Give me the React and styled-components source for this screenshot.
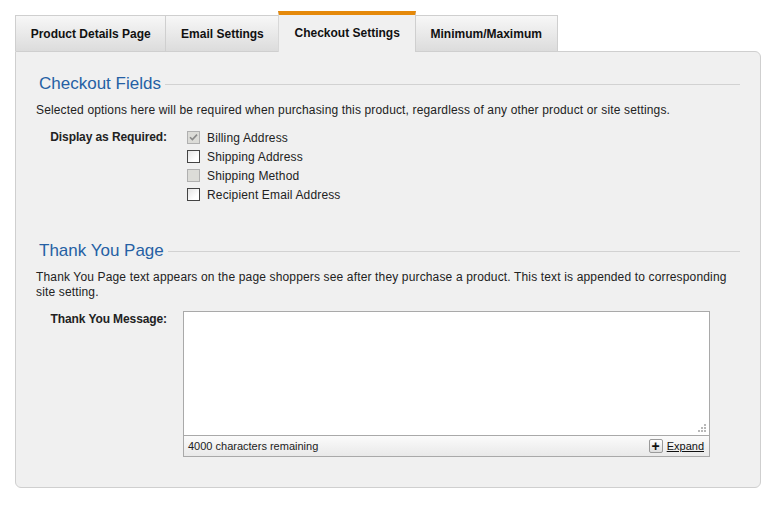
import React, { useState } from "react";
import styled, { createGlobalStyle } from "styled-components";

const GlobalStyle = createGlobalStyle`
  html, body {
    margin: 0;
    padding: 0;
    background: #fff;
  }
  body {
    font-family: "Liberation Sans", Arial, sans-serif;
    font-size: 12px;
    color: #222;
  }
`;

const tabs = [
  "Product Details Page",
  "Email Settings",
  "Checkout Settings",
  "Minimum/Maximum",
];

const fields = [
  { label: "Billing Address", checked: true, disabled: true },
  { label: "Shipping Address", checked: false, disabled: false },
  { label: "Shipping Method", checked: false, disabled: true },
  { label: "Recipient Email Address", checked: false, disabled: false },
];

const MAX_CHARS = 4000;

const Checkbox = ({ checked, disabled, onChange }) => (
  <Box $disabled={disabled} onClick={disabled ? undefined : onChange}>
    {checked && (
      <svg width="9" height="9" viewBox="0 0 9 9">
        <path
          d="M1 4.2 L3.4 6.6 L8 1.6"
          fill="none"
          stroke={disabled ? "#8a8a8a" : "#222"}
          strokeWidth="1.6"
        />
      </svg>
    )}
  </Box>
);

const App = () => {
  const [active, setActive] = useState(2);
  const [checks, setChecks] = useState(fields.map((f) => f.checked));
  const [message, setMessage] = useState("");

  const toggle = (i) => {
    const next = [...checks];
    next[i] = !next[i];
    setChecks(next);
  };

  return (
    <Page>
      <GlobalStyle />
      <Tabs>
        {tabs.map((t, i) => (
          <Tab key={t} $active={i === active} onClick={() => setActive(i)}>
            {t}
          </Tab>
        ))}
      </Tabs>
      <Panel>
        <Heading>Checkout Fields</Heading>
        <Description>
          Selected options here will be required when purchasing this product,
          regardless of any other product or site settings.
        </Description>
        <FormRow>
          <FieldLabel>Display as Required:</FieldLabel>
          <CheckList>
            {fields.map((f, i) => (
              <CheckRow key={f.label}>
                <Checkbox
                  checked={checks[i]}
                  disabled={f.disabled}
                  onChange={() => toggle(i)}
                />
                <span>{f.label}</span>
              </CheckRow>
            ))}
          </CheckList>
        </FormRow>

        <Heading $spaced>Thank You Page</Heading>
        <Description>
          Thank You Page text appears on the page shoppers see after they
          purchase a product. This text is appended to corresponding site
          setting.
        </Description>
        <FormRow>
          <FieldLabel $top>Thank You Message:</FieldLabel>
          <Editor>
            <TextArea
              value={message}
              onChange={(e) => setMessage(e.target.value.slice(0, MAX_CHARS))}
            />
            <Grip>
              <svg width="8" height="8" viewBox="0 0 8 8">
                <g fill="#b8b8b8">
                  <rect x="6" y="0" width="2" height="2" />
                  <rect x="3" y="3" width="2" height="2" />
                  <rect x="6" y="3" width="2" height="2" />
                  <rect x="0" y="6" width="2" height="2" />
                  <rect x="3" y="6" width="2" height="2" />
                  <rect x="6" y="6" width="2" height="2" />
                </g>
              </svg>
            </Grip>
            <EditorFooter>
              <span>{MAX_CHARS - message.length} characters remaining</span>
              <ExpandLink>
                <PlusButton>+</PlusButton>
                <u>Expand</u>
              </ExpandLink>
            </EditorFooter>
          </Editor>
        </FormRow>
      </Panel>
    </Page>
  );
};

export default App;

const Page = styled.div`
  padding: 11px 17px 17px 15px;
`;

const Tabs = styled.div`
  display: flex;
  align-items: flex-end;
`;

const Tab = styled.div`
  height: ${(p) => (p.$active ? "36px" : "35px")};
  display: flex;
  align-items: center;
  padding: 0 ${(p) => (p.$active ? "15px" : "14.7px")};
  font-weight: bold;
  font-size: 12px;
  color: #111;
  cursor: pointer;
  border: 1px solid #cfcfcf;
  border-bottom: none;
  margin-right: -1px;
  background: ${(p) =>
    p.$active ? "#f0f0f0" : "linear-gradient(#f7f7f7, #dcdcdc)"};
  border-top: ${(p) => (p.$active ? "4px solid #e5890a" : "1px solid #cfcfcf")};
  border-left-color: ${(p) => (p.$active ? "#d8d8d8" : "#cfcfcf")};
  position: relative;
  z-index: ${(p) => (p.$active ? 1 : 0)};
  margin-bottom: ${(p) => (p.$active ? "-1px" : "0")};
  padding-bottom: ${(p) => (p.$active ? "1px" : "0")};
`;

const Panel = styled.div`
  background: #f0f0f0;
  border: 1px solid #cfcfcf;
  border-radius: 0 6px 6px 6px;
  padding: 22px 20px 30px 20px;
`;

const Heading = styled.div`
  display: flex;
  align-items: center;
  height: 20px;
  padding-left: 3px;
  margin-top: ${(p) => (p.$spaced ? "37px" : "0")};
  font-size: 17px;
  color: #2560a4;

  &:after {
    content: "";
    flex: 1;
    height: 1px;
    margin-left: 4px;
    background: #d2d2d2;
  }
`;

const Description = styled.p`
  margin: 9px 0 10px;
  line-height: 15px;
  font-size: 12px;
  letter-spacing: 0.15px;
  color: #222;
`;

const FormRow = styled.div`
  display: flex;
  align-items: flex-start;
  gap: 16px;
`;

const FieldLabel = styled.div`
  width: 131px;
  flex-shrink: 0;
  text-align: right;
  font-weight: bold;
  font-size: 12px;
  letter-spacing: -0.1px;
  color: #222;
  line-height: ${(p) => (p.$top ? "18px" : "19px")};
`;

const CheckList = styled.div`
  display: flex;
  flex-direction: column;
`;

const CheckRow = styled.label`
  display: flex;
  align-items: center;
  height: 19px;
  gap: 7px;
  padding-left: 4px;
  font-size: 12px;
  letter-spacing: 0.15px;
  color: #222;
`;

const Box = styled.span`
  box-sizing: border-box;
  width: 13px;
  height: 13px;
  display: flex;
  align-items: center;
  justify-content: center;
  border: 1px solid ${(p) => (p.$disabled ? "#b0b0b0" : "#444")};
  background: ${(p) =>
    p.$disabled ? "#dcdcd8" : "linear-gradient(135deg, #e4e4e4, #ffffff 70%)"};
  cursor: ${(p) => (p.$disabled ? "default" : "pointer")};
`;

const Editor = styled.div`
  position: relative;
  width: 525px;
  margin-top: 1px;
  display: flex;
  flex-direction: column;
  border: 1px solid #a9a9a9;
`;

const TextArea = styled.textarea`
  box-sizing: border-box;
  height: 124px;
  border: none;
  border-bottom: 1px solid #a9a9a9;
  resize: none;
  outline: none;
  padding: 4px;
  background: #fff;
  font-family: "Liberation Sans", Arial, sans-serif;
  font-size: 12px;
`;

const Grip = styled.span`
  position: absolute;
  right: 3px;
  top: 112px;
  line-height: 0;
  pointer-events: none;
`;

const EditorFooter = styled.div`
  height: 20px;
  display: flex;
  align-items: center;
  justify-content: space-between;
  padding: 0 5px 0 4px;
  background: linear-gradient(#fbfbfb, #e9e9e9);
  font-size: 11px;
  color: #222;
`;

const ExpandLink = styled.a`
  display: flex;
  align-items: center;
  gap: 4px;
  color: #111;
  cursor: pointer;
  font-size: 11px;
`;

const PlusButton = styled.span`
  box-sizing: border-box;
  width: 14px;
  height: 14px;
  display: flex;
  align-items: center;
  justify-content: center;
  border: 1px solid #9a9a9a;
  border-radius: 2px;
  background: linear-gradient(#ffffff, #dedede);
  font-weight: bold;
  font-size: 14px;
  line-height: 1;
  color: #111;
`;
